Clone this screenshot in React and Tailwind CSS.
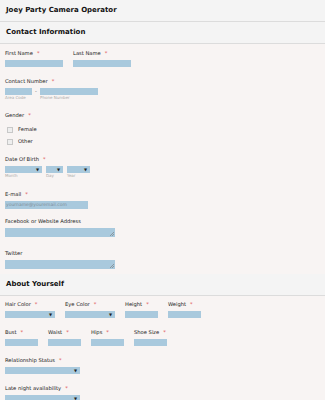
import React from 'react';

const Req = () => <span className="text-[#e05050] ml-[4px]">*</span>;

function Label({ children, required, className = '' }) {
  return (
    <div className={`h-[7px] leading-[7px] text-[5.2px] text-[#222] whitespace-nowrap ${className}`}>
      {children}
      {required && <Req />}
    </div>
  );
}

function Box({ w, h = 'h-[7px]', children }) {
  return <div className={`${w} ${h} bg-[#a9c9dd] relative`}>{children}</div>;
}

function Select({ w }) {
  return (
    <Box w={w}>
      <span className="absolute right-[3px] top-0 leading-[7px] text-[4px] text-[#222]">▼</span>
    </Box>
  );
}

function TextArea() {
  return (
    <div className="w-[110px] h-[9px] bg-[#a9c9dd] relative">
      <svg className="absolute right-[1px] bottom-[1px]" width="4" height="4" viewBox="0 0 4 4">
        <path d="M4 0L0 4M4 2L2 4" stroke="#777" strokeWidth="0.6" />
      </svg>
    </div>
  );
}

function Sub({ children, className = '' }) {
  return <div className={`text-[4px] leading-[5px] text-[#aaa] ${className}`}>{children}</div>;
}

function SectionHead({ children, className = '' }) {
  return (
    <div className={`h-[22px] flex items-center px-[6px] bg-[#f4f4f4] border-b border-[#dcdcdc] ${className}`}>
      <span className="text-[7px] font-bold text-[#111]">{children}</span>
    </div>
  );
}

export default function App() {
  return (
    <div className="w-[325px] h-[400px] overflow-hidden bg-[#f8f4f3] font-['DejaVu_Sans',sans-serif]">
      <div className="h-[22px] flex items-center px-[6px] bg-[#f4f4f4] border-b border-[#dcdcdc]">
        <span className="text-[7px] font-bold text-[#111]">Joey Party Camera Operator</span>
      </div>
      <SectionHead>Contact Information</SectionHead>

      <div className="px-[5px]">
        {/* Name */}
        <div className="flex gap-[10px] pt-[6px]">
          <div>
            <Label required>First Name</Label>
            <div className="mt-[3px]"><Box w="w-[58px]" /></div>
          </div>
          <div>
            <Label required>Last Name</Label>
            <div className="mt-[3px]"><Box w="w-[58px]" /></div>
          </div>
        </div>

        {/* Contact number */}
        <div className="mt-[11px]">
          <Label required>Contact Number</Label>
          <div className="flex items-start mt-[3px]">
            <div>
              <Box w="w-[27px]" />
              <Sub>Area Code</Sub>
            </div>
            <span className="w-[8px] text-center text-[5px] leading-[7px] text-[#555]">-</span>
            <div>
              <Box w="w-[58px]" />
              <Sub>Phone Number</Sub>
            </div>
          </div>
        </div>

        {/* Gender */}
        <div className="mt-[12px]">
          <Label required>Gender</Label>
          <div className="mt-[7px] flex flex-col gap-[5px] pl-[2px]">
            {['Female', 'Other'].map((g) => (
              <div key={g} className="flex items-center gap-[5px] h-[7px]">
                <div className="w-[6px] h-[6px] border border-[#c8c8c8] bg-[#eee]" />
                <span className="text-[5.2px] text-[#222]">{g}</span>
              </div>
            ))}
          </div>
        </div>

        {/* DOB */}
        <div className="mt-[11px]">
          <Label required>Date Of Birth</Label>
          <div className="flex gap-[4px] mt-[3px]">
            <div>
              <Select w="w-[37px]" />
              <Sub>Month</Sub>
            </div>
            <div>
              <Select w="w-[17px]" />
              <Sub>Day</Sub>
            </div>
            <div>
              <Select w="w-[23px]" />
              <Sub>Year</Sub>
            </div>
          </div>
        </div>

        {/* Email */}
        <div className="mt-[13px]">
          <Label required>E-mail</Label>
          <div className="mt-[3px] w-[83px] h-[8px] bg-[#a9c9dd] text-[4.5px] leading-[8px] text-[#7d8d98] pl-[1px]">
            yourname@youremail.com
          </div>
        </div>

        <div className="mt-[9px]">
          <Label>Facebook or Website Address</Label>
          <div className="mt-[3px]"><TextArea /></div>
        </div>

        <div className="mt-[13px]">
          <Label>Twitter</Label>
          <div className="mt-[3px]"><TextArea /></div>
        </div>
      </div>

      <SectionHead className="mt-[5px]">About Yourself</SectionHead>

      <div className="px-[5px]">
        <div className="flex gap-[10px] pt-[5px]">
          <div>
            <Label required>Hair Color</Label>
            <div className="mt-[3px]"><Select w="w-[50px]" /></div>
          </div>
          <div>
            <Label required>Eye Color</Label>
            <div className="mt-[3px]"><Select w="w-[50px]" /></div>
          </div>
          <div>
            <Label required>Height</Label>
            <div className="mt-[3px]"><Box w="w-[33px]" /></div>
          </div>
          <div>
            <Label required>Weight</Label>
            <div className="mt-[3px]"><Box w="w-[33px]" /></div>
          </div>
        </div>

        <div className="flex gap-[10px] mt-[11px]">
          {['Bust', 'Waist', 'Hips', 'Shoe Size'].map((l) => (
            <div key={l}>
              <Label required>{l}</Label>
              <div className="mt-[3px]"><Box w="w-[33px]" /></div>
            </div>
          ))}
        </div>

        <div className="mt-[11px]">
          <Label required>Relationship Status</Label>
          <div className="mt-[3px]"><Select w="w-[75px]" /></div>
        </div>

        <div className="mt-[11px]">
          <Label required>Late night availability</Label>
          <div className="mt-[3px]"><Select w="w-[75px]" /></div>
        </div>
      </div>
    </div>
  );
}
